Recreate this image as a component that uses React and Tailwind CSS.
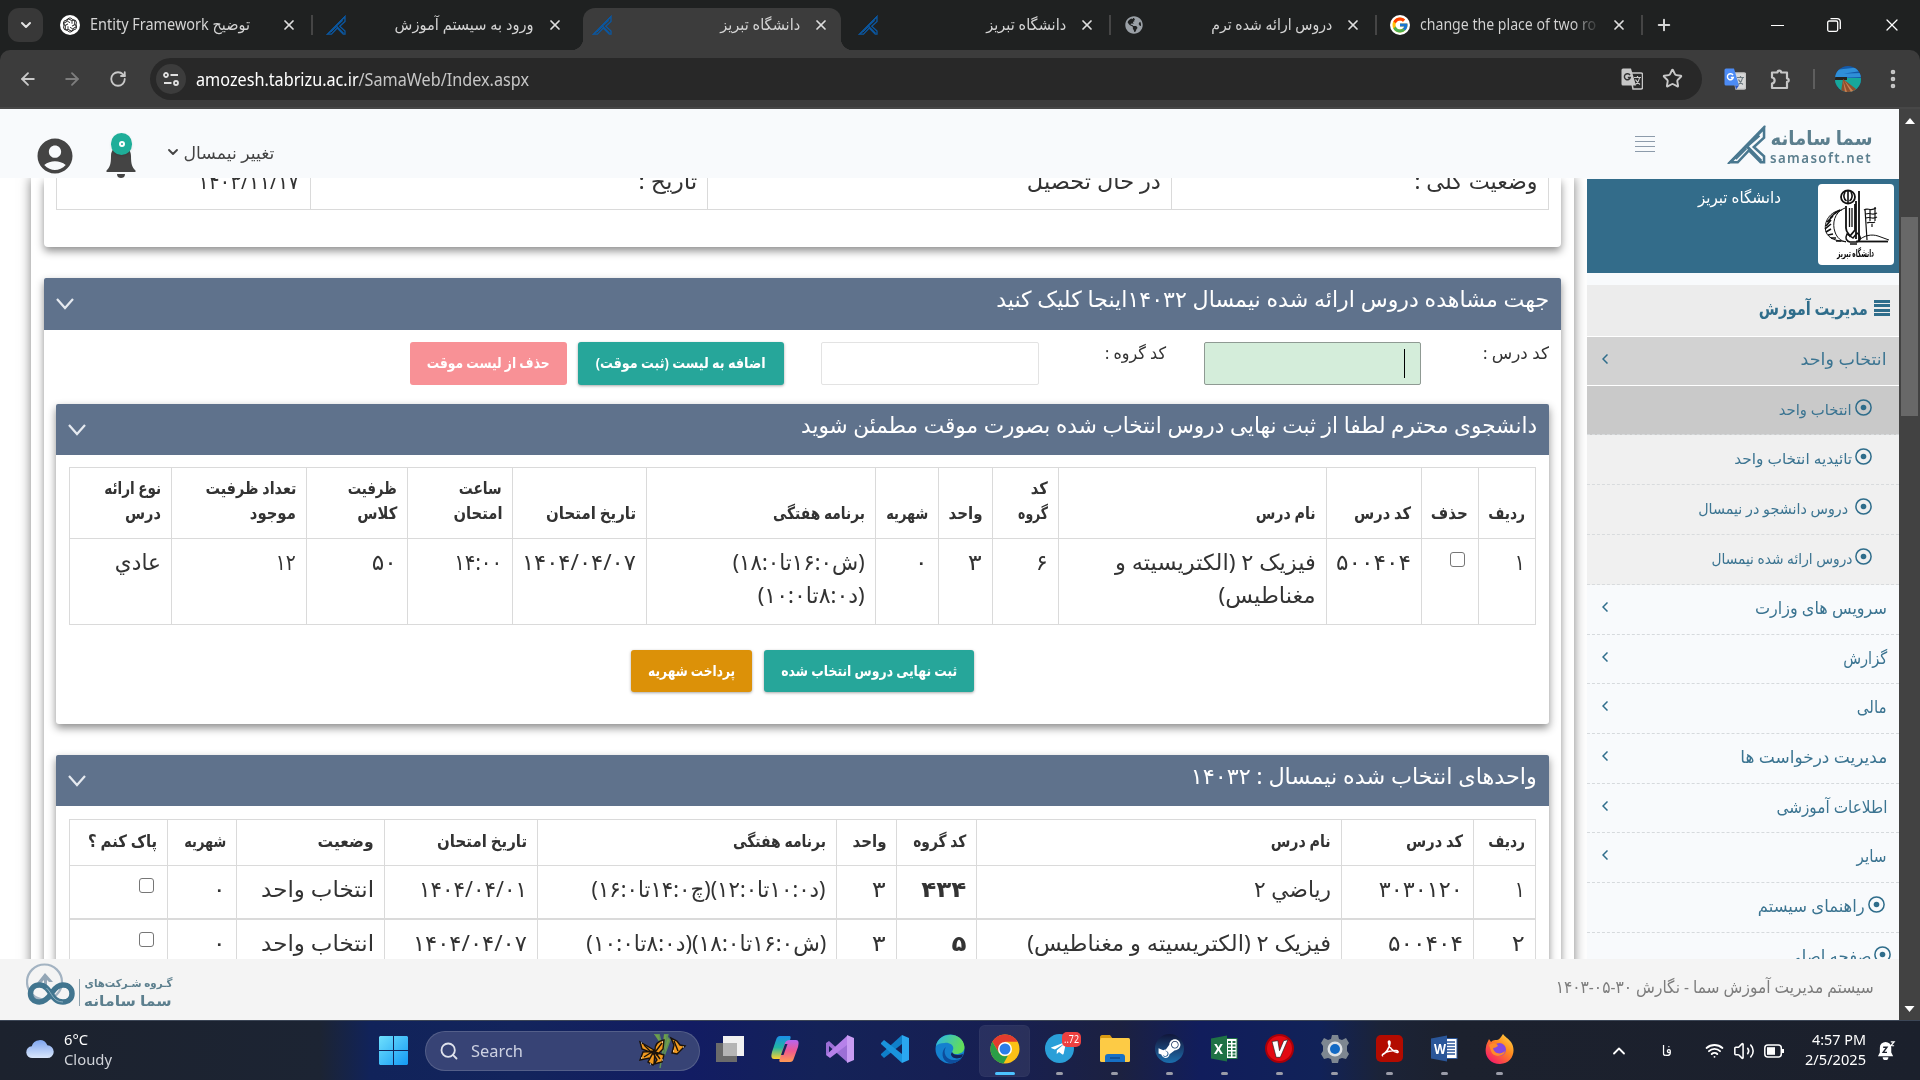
import React, { useLayoutEffect, useRef } from "react";
import {
  ArrowLeft, ArrowRight, RotateCw, X, Plus, ChevronDown, Star, EllipsisVertical,
  Search, ChevronUp, Wifi, Volume2,
} from "lucide-react";
import { FcGoogle } from "react-icons/fc";
import { FaTelegramPlane, FaSteamSymbol, FaGlobeAmericas } from "react-icons/fa";
import { MdAccountCircle } from "react-icons/md";

/* A single line of text condensed or stretched to a given width. */
function Fit({ w, children, ltr = false, className = "" }) {
  const ref = useRef(null);
  useLayoutEffect(() => {
    const el = ref.current;
    el.style.transform = "none";
    const natural = el.getBoundingClientRect().width;
    if (natural > 0) el.style.transform = `scaleX(${w / natural})`;
  });
  return (
    <span dir={ltr ? "ltr" : "rtl"} className={"flex shrink-0 justify-start " + className} style={{ width: w }}>
      <span ref={ref} className={"block shrink-0 whitespace-nowrap " + (ltr ? "origin-left" : "origin-right")}>
        {children}
      </span>
    </span>
  );
}

/* ---------- browser frame ---------- */

function SamaMark({ className, color }) {
  return (
    <svg viewBox="0 0 40 40" className={className} fill="none" stroke={color} strokeWidth="2.600">
      <path d="M38 3.500V13L27.500 22.500 38 32v6.300h-3.500L22.500 26 11 38.300H3.500z" />
      <path d="M33 10.500 19.500 22.500M20 21.500 35 37" strokeWidth="3.200" />
      <path d="M1 40 39 1" strokeWidth="2" />
      <path d="M9 35 20 24" strokeWidth="2" />
    </svg>
  );
}

function OpenAIMark() {
  return (
    <svg viewBox="0 0 24 24" className="size-5">
      <circle cx="12" cy="12" r="12" fill="#fff" />
      <g fill="none" stroke="#222" strokeWidth="1.100">
        {[0, 60, 120, 180, 240, 300].map((a) => (
          <path key={a} transform={`rotate(${a} 12 12)`} d="M12 9.200 8.600 7.300V6.400A3.300 3.300 0 0 1 14.600 5l3 1.900v4.200" />
        ))}
      </g>
    </svg>
  );
}

const sama = <SamaMark className="size-5" color="#0b57a0" />;

function Tab({ icon, children, active, sep, w, ltr }) {
  return (
    <div className="relative flex h-[50px] w-[266px] shrink-0 items-center">
      {active && (
        <>
          <div className="absolute inset-x-1 top-2 bottom-0 rounded-t-[12px] bg-[#3c3c3c]" />
          <div className="absolute bottom-0 -left-2 size-3 bg-[radial-gradient(circle_at_0_0,#1f2121_12px,#3c3c3c_12.5px)]" />
          <div className="absolute -right-2 bottom-0 size-3 bg-[radial-gradient(circle_at_100%_0,#1f2121_12px,#3c3c3c_12.5px)]" />
        </>
      )}
      <div className="relative ml-[13px] flex size-5 items-center justify-center">{icon}</div>
      <div className={"relative ml-[10px] flex h-6 w-[178px] items-center text-[15.500px] text-[#d4d4d4] " + (ltr ? "" : "justify-end")}>
        <Fit w={w} ltr={ltr}>{children}</Fit>
      </div>
      <X className="absolute left-[234px] size-4 text-[#dedede]" strokeWidth={2.6} />
      {sep && <div className="absolute right-0 h-5 w-[2px] bg-[#454545]" />}
    </div>
  );
}

function TranslateIcon({ blue }) {
  return (
    <svg viewBox="0 0 22 22" className="size-[22px]">
      <path d="M9 5h11a1.500 1.500 0 0 1 1.500 1.500v13A1.500 1.500 0 0 1 20 21h-8z" fill={blue ? "#d8d8d8" : "none"} stroke="#c7c7c7" strokeWidth="1.500" />
      <path d="M2 .5h8l5 17H2A1.500 1.500 0 0 1 .5 16V2A1.500 1.500 0 0 1 2 .5z" fill={blue ? "#4c8bf5" : "#c7c7c7"} />
      <path d="M9 7.200A3 3 0 1 0 9.300 9.500H6.800" fill="none" stroke={blue ? "#fff" : "#333"} strokeWidth="1.400" />
      <path d="M13 9.500h7M16.500 8v1.500M18.500 10c-.5 3-2 5-4 6.500M14.500 11.500c1 2 2.500 3.500 4.500 5" fill="none" stroke={blue ? "#6d7a80" : "#c7c7c7"} strokeWidth="1.200" />
      {blue && <path d="m11 17.500 4 0-3 4z" fill="#2a56c6" />}
    </svg>
  );
}

function TabStrip() {
  return (
    <div className="flex h-[50px] items-center bg-[#1f2121]">
      <div className="ml-2 flex h-[34px] w-[35px] items-center justify-center rounded-[11px] bg-[#383838]">
        <ChevronDown className="size-4 text-[#e3e3e3]" strokeWidth={3} />
      </div>
      <div className="ml-1 flex">
        <Tab icon={<OpenAIMark />} w={160} ltr sep>Entity Framework توضیح</Tab>
        <Tab icon={sama} w={139}>ورود به سیستم آموزش</Tab>
        <Tab icon={sama} w={80} active>دانشگاه تبریز</Tab>
        <Tab icon={sama} w={80} sep>دانشگاه تبریز</Tab>
        <Tab icon={<FaGlobeAmericas className="size-[18px] text-[#9aa0a6]" />} w={121} sep>دروس ارائه شده ترم</Tab>
        <Tab icon={<div className="flex size-5 items-center justify-center rounded-full bg-white"><FcGoogle className="size-[18px]" /></div>} w={176} ltr sep>
          <span className="bg-linear-to-r from-[#d4d4d4] from-88% to-[#3a3c3c] bg-clip-text text-transparent">change the place of two ro</span>
        </Tab>
      </div>
      <Plus className="ml-[12px] size-[18px] text-[#d6d6d6]" strokeWidth={2.6} />
      <div className="flex-1" />
      <div className="flex w-[149px] items-center">
        <div className="h-px w-[13px] bg-white" />
        <svg viewBox="0 0 14 14" className="ml-[43px] size-[14px]" fill="none" stroke="#fff" strokeWidth="1.300">
          <rect x=".7" y="3" width="10" height="10.300" rx="1.500" />
          <path d="M3.500.7H10A3.300 3.300 0 0 1 13.300 4v7" />
        </svg>
        <X className="ml-[41px] size-[20px] text-white" strokeWidth={1.5} />
      </div>
    </div>
  );
}

function Toolbar() {
  return (
    <div className="bg-[#1f2121]">
      <div className="flex h-[59px] items-center rounded-t-[10px] border-b-2 border-[#474747] bg-[#3c3c3c] text-[#c9c9c9]">
        <ArrowLeft className="ml-[18px] size-5" strokeWidth={2.2} />
        <ArrowRight className="ml-[24px] size-5 text-[#7d7d7d]" strokeWidth={2.2} />
        <RotateCw className="ml-[27px] size-[18px]" strokeWidth={2.4} />
        <div className="ml-[23px] flex h-[42px] w-[1552px] items-center rounded-full bg-[#282828]">
          <div className="ml-[6px] flex size-[30px] items-center justify-center rounded-full bg-[#3c3c3c]">
            <svg viewBox="0 0 16 16" className="size-4" fill="none" stroke="#e0e0e0" strokeWidth="1.800">
              <circle cx="3" cy="4" r="2" /><path d="M7.500 4H15M1 12h7.500" /><circle cx="13" cy="12" r="2" />
            </svg>
          </div>
          <div className="ml-[10px] pt-px text-[18px]">
            <Fit w={333} ltr><span className="text-white">amozesh.tabrizu.ac.ir</span><span className="text-[#c7c7c7]">/SamaWeb/Index.aspx</span></Fit>
          </div>
          <div className="mr-[19px] ml-auto flex items-center gap-[19px]">
            <TranslateIcon />
            <Star className="size-[21px]" strokeWidth={2.2} />
          </div>
        </div>
        <div className="ml-[22px]"><TranslateIcon blue /></div>
        <svg viewBox="0 0 22 22" className="ml-[23px] size-[22px]" fill="none" stroke="#c7c7c7" strokeWidth="2.200">
          <path d="M3 4.500h5.500a1.800 1.800 0 0 1 3.600 0H18v6a1.700 1.700 0 0 1 0 3.400V20H3v-4.500c3.500-.5 3.500-5.500 0-6z" strokeLinejoin="round" />
        </svg>
        <div className="ml-[22px] h-5 w-[2px] bg-[#5e5e5e]" />
        <svg viewBox="0 0 26 26" className="ml-[20px] size-[26px]">
          <defs><clipPath id="av"><circle cx="13" cy="13" r="13" /></clipPath></defs>
          <g clipPath="url(#av)">
            <rect width="26" height="26" fill="#1459a8" />
            <path d="M0 4 26 1v4L0 9zM0 8l26-1v4L0 12z" fill="#2f8fd8" />
            <rect y="12" width="26" height="14" fill="#17a79a" />
            <path d="M0 11h12v3H0z" fill="#25231f" />
            <path d="M8 13 25 26H6z" fill="#8e4f2d" />
            <path d="m8 14 2 12h2zM9 14l7 12h3z" fill="#c78355" />
          </g>
        </svg>
        <EllipsisVertical className="ml-[20px] size-6" strokeWidth={2.6} />
      </div>
    </div>
  );
}

/* ---------- page header ---------- */

function PageHeader() {
  return (
    <div className="flex h-[69px] shrink-0 bg-[#f8fafc]">
      <MdAccountCircle className="mt-[26px] ml-[34px] size-[42px] text-[#444]" />
      <div className="relative ml-[30px] h-[69px] w-[30px]">
        <svg viewBox="0 0 30 32" className="mt-[37px] h-[32px] w-[30px]" fill="#444">
          <path d="M15 0c6 0 10 4 10 10 0 8 1 11 4.500 14.500V26H.5v-1.500C4 21 5 18 5 10 5 4 9 0 15 0zM11 28h8c0 3-2 4-4 4s-4-1-4-4z" />
        </svg>
        <div className="absolute top-6 left-[5px] flex h-[22px] w-[21px] items-center justify-center rounded-full bg-[#1fae99] shadow">
          <span className="size-[6px] rounded-full border-2 border-white" />
        </div>
      </div>
      <ChevronDown className="mt-[35px] ml-[29px] size-4 text-[#444]" strokeWidth={2.8} />
      <Fit w={91} className="mt-[30px] ml-[2px] text-[17px] leading-7 text-[#444]">تغییر نیمسال</Fit>
      <div className="mt-[27px] ml-auto flex w-[20px] flex-col gap-[4px]">
        {[0, 1, 2, 3].map((i) => <div key={i} className="h-px bg-[#8d9bab]" />)}
      </div>
      <SamaMark className="mt-[16px] ml-[72px] h-[39px] w-[39px]" color="#4a7890" />
      <div className="mt-[16px] mr-[27px] ml-[4px] flex h-[44px] flex-col text-[#5c7f8e]">
        <Fit w={102} className="h-[25px] text-[20px] leading-[26px] font-bold">سما سامانه</Fit>
        <Fit w={102} ltr className="text-[14px] leading-[15px] font-semibold tracking-[1.500px]">samasoft.net</Fit>
      </div>
    </div>
  );
}

/* ---------- main panels ---------- */

const cardShadow = "shadow-[0_4px_8px_rgba(0,0,0,0.45)]";

function CardTitle({ w, h, children }) {
  return (
    <div className={"flex items-start justify-between rounded-t-[2px] bg-[#5f728c] px-3 text-white " + h}>
      <Fit w={w} className="text-[22px] leading-[41px]">{children}</Fit>
      <svg viewBox="0 0 18 12" className="mt-[20px] h-[12px] w-[18px]" fill="none" stroke="#e6eaf0" strokeWidth="2.200">
        <path d="m1 1 8 9 8-9" />
      </svg>
    </div>
  );
}

function Check({ className = "" }) {
  return <span className={"block size-[15px] rounded-[3px] border border-[#767676] bg-white " + className} />;
}

const cell = "border border-[#dadada] p-0";

const t1 = [
  { c: "w-[57px]", h: [["ردیف", 37]], b: [["۱", 10]] },
  { c: "w-[57px]", h: [["حذف", 37]], check: true },
  { c: "w-[95px]", h: [["کد درس", 57]], b: [["۵۰۰۴۰۴", 75]] },
  { c: "w-[268px]", h: [["نام درس", 60]], b: [["فیزیک ۲ (الکتریسیته و", 201], ["مغناطیس)", 97]] },
  { c: "w-[66px]", h: [["کد", 17], ["گروه", 30]], b: [["۶", 12]] },
  { c: "w-[54px]", h: [["واحد", 34]], b: [["۳", 14]] },
  { c: "w-[63px]", h: [["شهریه", 42]], b: [["۰", 13]] },
  { c: "w-[229px]", h: [["برنامه هفتگی", 92]], b: [["(ش۱۶:۰تا۱۸:۰)", 132], ["(د۸:۰تا۱۰:۰)", 107]] },
  { c: "w-[134px]", h: [["تاریخ امتحان", 90]], b: [["۱۴۰۴/۰۴/۰۷", 114]] },
  { c: "w-[105px]", h: [["ساعت", 43], ["امتحان", 49]], b: [["۱۴:۰۰", 48]] },
  { c: "w-[101px]", h: [["ظرفیت", 49], ["کلاس", 40]], b: [["۵۰", 25]] },
  { c: "w-[135px]", h: [["تعداد ظرفیت", 91], ["موجود", 46]], b: [["۱۲", 20]] },
  { c: "w-[102px]", h: [["نوع ارائه", 57], ["درس", 36]], b: [["عادي", 46]] },
];

function TempTable() {
  return (
    <table className="mt-3 mr-px w-[1466px] table-fixed border-collapse">
      <thead>
        <tr className="h-[71px]">
          {t1.map((c, i) => (
            <th key={i} className={cell + " pr-[10px] pb-[13px] align-bottom text-[17px] leading-[25px] font-bold " + c.c}>
              {c.h.map(([t, w]) => <Fit key={t} w={w}>{t}</Fit>)}
            </th>
          ))}
        </tr>
      </thead>
      <tbody>
        <tr className="h-[86px]">
          {t1.map((c, i) => (
            <td key={i} className={cell + " pt-[6px] pr-[10px] align-top text-[22px] leading-[33px]"}>
              {c.check ? <Check className="mt-[7px] mr-[3px]" /> : c.b.map(([t, w]) => <Fit key={t} w={w}>{t}</Fit>)}
            </td>
          ))}
        </tr>
      </tbody>
    </table>
  );
}

const t2 = [
  { c: "w-[62px]", h: ["ردیف", 37], b: [["۱", 10], ["۲", 13]] },
  { c: "w-[132px]", h: ["کد درس", 57], b: [["۳۰۳۰۱۲۰", 84], ["۵۰۰۴۰۴", 75]] },
  { c: "w-[365px]", h: ["نام درس", 60], b: [["رياضي ۲", 77], ["فیزیک ۲ (الکتریسیته و مغناطیس)", 304]] },
  { c: "w-[80px]", h: ["کد گروه", 53], b: [["۴۳۴", 45], ["۵", 15]], bold: true },
  { c: "w-[60px]", h: ["واحد", 34], b: [["۳", 14], ["۳", 14]] },
  { c: "w-[299px]", h: ["برنامه هفتگی", 93], b: [["(د۱۰:۰تا۱۲:۰)(چ۱۴:۰تا۱۶:۰)", 234], ["(ش۱۶:۰تا۱۸:۰)(د۸:۰تا۱۰:۰)", 240]] },
  { c: "w-[153px]", h: ["تاریخ امتحان", 90], b: [["۱۴۰۴/۰۴/۰۱", 108], ["۱۴۰۴/۰۴/۰۷", 114]] },
  { c: "w-[148px]", h: ["وضعیت", 56], b: [["انتخاب واحد", 113], ["انتخاب واحد", 113]] },
  { c: "w-[69px]", h: ["شهریه", 42], b: [["۰", 13], ["۰", 13]] },
  { c: "w-[98px]", h: ["پاک کنم ؟", 69] },
];

function ChosenTable() {
  return (
    <table className="mt-[13px] mr-px w-[1466px] table-fixed border-collapse">
      <thead>
        <tr className="h-[46px]">
          {t2.map((c, i) => (
            <th key={i} className={cell + " pr-[10px] pb-[5px] align-middle text-[17px] leading-[25px] font-bold " + c.c}>
              <Fit w={c.h[1]}>{c.h[0]}</Fit>
            </th>
          ))}
        </tr>
      </thead>
      <tbody>
        {[0, 1].map((r) => (
          <tr key={r} className={r ? "h-[54px] border-t-2 border-[#dadada]" : "h-[53px]"}>
            {t2.map((c, i) => (
              <td key={i} className={cell + " pt-[6px] pr-[10px] align-top text-[22px] leading-[33px] " + (c.bold ? "font-bold" : "")}>
                {c.b ? <Fit w={c.b[r][1]}>{c.b[r][0]}</Fit> : <Check className="mt-[6px] mr-[3px]" />}
              </td>
            ))}
          </tr>
        ))}
      </tbody>
    </table>
  );
}

function Button({ w, className, children }) {
  return (
    <div className={"flex items-center justify-center rounded-[3px] pb-[2px] text-[15px] font-bold text-white " + className}>
      <Fit w={w}>{children}</Fit>
    </div>
  );
}

function Main() {
  const status = [
    ["وضعیت کلی :", 123, "w-[378px] pr-[10px]"],
    ["در حال تحصیل", 134, "w-[464px] pr-[10px]"],
    ["تاریخ :", 59, "w-[398px] pr-[10px]"],
    ["۱۴۰۳/۱۱/۱۷", 101, "w-[254px] pr-[11px]"],
  ];
  return (
    <div className="h-[781px] w-[1587px] overflow-hidden bg-white text-[#333]">
      <div dir="rtl" className="ml-[31px] h-[900px] w-[1543px] px-[13px] shadow-[0_0_11px_rgba(0,0,0,0.5)]">
        <div className={"h-[69px] rounded-b-[4px] bg-white px-[12px] " + cardShadow}>
          <div className="flex h-8 border-b border-l border-[#dadada]">
            {status.map(([t, w, c]) => (
              <div key={t} className={"h-8 overflow-hidden border-r border-[#dadada] " + c}>
                <Fit w={w} className="mt-[-14px] text-[22px] leading-[33px]">{t}</Fit>
              </div>
            ))}
          </div>
        </div>
        <div className={"mt-[31px] h-[800px] bg-white " + cardShadow}>
          <CardTitle w={553} h="h-[52px]">جهت مشاهده دروس ارائه شده نیمسال ۱۴۰۳۲اینجا کلیک کنید</CardTitle>
          <div className="flex h-[74px] items-start px-3 pt-3">
            <Fit w={66} className="text-[17px] leading-[21px]">کد درس :</Fit>
            <div className="mr-[62px] flex h-[43px] w-[217px] rounded-[2px] border border-[#8f9a93] bg-[#d4edda] pt-[6px] pr-[15px]">
              <div className="h-[29px] w-px bg-black" />
            </div>
            <Fit w={61} className="mr-[38px] text-[17px] leading-[21px]">کد گروه :</Fit>
            <div className="mr-[66px] h-[43px] w-[218px] rounded-[2px] border border-[#e3e3e3]" />
            <Button w={170} className="mr-[37px] h-[43px] w-[206px] bg-[#26a69a] shadow-[0_1px_3px_rgba(0,0,0,0.35)]">اضافه به لیست (ثبت موقت)</Button>
            <Button w={123} className="mr-[11px] h-[43px] w-[157px] bg-[#f89196]">حذف از لیست موقت</Button>
          </div>
          <div className="px-3">
            <div className={"h-[320px] rounded-[3px] bg-white " + cardShadow}>
              <CardTitle w={736} h="h-[51px]">دانشجوی محترم لطفا از ثبت نهایی دروس انتخاب شده بصورت موقت مطمئن شوید</CardTitle>
              <div className="px-3"><TempTable /></div>
              <div className="mt-[25px] flex justify-center gap-3">
                <Button w={176} className="h-[42px] w-[210px] bg-[#26a69a] shadow-[0_1px_3px_rgba(0,0,0,0.35)]">ثبت نهایی دروس انتخاب شده</Button>
                <Button w={87} className="h-[42px] w-[121px] bg-[#dc9108] shadow-[0_1px_3px_rgba(0,0,0,0.35)]">پرداخت شهریه</Button>
              </div>
            </div>
            <div className={"mt-[31px] h-[320px] bg-white " + cardShadow}>
              <CardTitle w={346} h="h-[51px]">واحدهای انتخاب شده نیمسال : ۱۴۰۳۲</CardTitle>
              <div className="px-3"><ChosenTable /></div>
            </div>
          </div>
        </div>
      </div>
    </div>
  );
}

/* ---------- sidebar ---------- */

function Dot() {
  return (
    <svg viewBox="0 0 17 17" className="mt-[13px] size-[17px] shrink-0">
      <circle cx="8.500" cy="8.500" r="7.600" fill="none" stroke="#2f6d8b" strokeWidth="1.500" />
      <circle cx="8.500" cy="8.500" r="2.800" fill="#2f6d8b" />
    </svg>
  );
}

function UniversityMark() {
  return (
    <svg viewBox="0 0 76 81" className="h-[81px] w-[76px]">
      <rect width="76" height="81" rx="4" fill="#fff" />
      <g fill="none" stroke="#111" strokeWidth="1">
        <ellipse cx="30" cy="13" rx="7" ry="6.500" strokeWidth="1.800" />
        <path d="M30 6v14M27 8c-2 4-1 7 1.500 9M33 8c2 4 1 7-1.500 9" strokeWidth="1.600" />
        <path d="M28 22v22c0 4 2 5 4 8l5-6V20" strokeWidth="1.800" />
        <path d="M41 7v50M38 17v38" strokeWidth="1.800" />
        <path d="M31.500 24v19M34 24v19" strokeWidth="1.300" />
        <path d="M29 50c-2 4-1 7 3 8h6c5-1 6-5 1-9l-4 5zM32 60h7" strokeWidth="1.500" />
        <path d="M27 24C16 28 14 40 17 48c2 6 6 9 11 10" />
        <path d="M24 26C12 27 5 38 8 48c3 7 10 9 20 9.500" />
        <path d="M22 26l-6 4M18 28l-6 6M15 32l-6 6M13 36l-5 6M13 40l-6 5M13 45l-5 3M15 50l-5 1M18 54l-5 0M23 57l-5 0" strokeWidth="1.600" />
        <path d="M38 57.500h32" strokeWidth="1.800" />
        <path d="M40 57c6-6 14-7 20-5l11 4" />
        <path d="M47 25l2 31M46 26c4-3 6 2 12-2M48 30c4-2 6 2 11-1M48 34c4-2 6 2 11-1M49 39c3-2 5 1 8-1" strokeWidth="1.200" />
        <path d="M52 25v12M57 23v14M54 40v3" strokeWidth="1.200" />
      </g>
      <foreignObject x="14" y="61" width="42" height="17">
        <div dir="rtl" className="text-[11px] leading-[15px] font-bold text-black"><Fit w={37}>دانشگاه تبریز</Fit></div>
      </foreignObject>
    </svg>
  );
}

const side = [
  ["سرویس های وزارت", 132], ["گزارش", 44], ["مالی", 30], ["مدیریت درخواست ها", 147], ["اطلاعات آموزشی", 111], ["سایر", 30],
];
const sub = [
  ["انتخاب واحد", 73, "bg-[#c9c9c9] h-[49px]", "mr-[3px]"],
  ["تائیدیه انتخاب واحد", 118, "bg-[#f0f0f0] h-[50px]", "mr-[3px]"],
  ["دروس دانشجو در نیمسال", 150, "bg-[#f0f0f0] h-[50px]", "mr-[7px]"],
  ["دروس ارائه شده نیمسال", 141, "bg-[#f0f0f0] h-[50px]", "mr-[3px]"],
];

function Arrow() {
  return <svg viewBox="0 0 6 10" className="mt-[17px] mr-auto ml-[15px] h-[10px] w-[6px]" fill="none" stroke="#2f6d8b" strokeWidth="1.500"><path d="M5.500.5 1 5l4.500 4.500" /></svg>;
}

function Sidebar() {
  return (
    <div dir="rtl" className="h-[781px] w-[312px] overflow-hidden bg-[#f8fafc] text-[#3b7491]">
      <div className="mt-px flex h-[94px] bg-[#336c8a] pt-[5px] pr-[5px]">
        <UniversityMark />
        <Fit w={83} className="mr-[37px] text-[16px] leading-[26px] text-white">دانشگاه تبریز</Fit>
      </div>
      <div className="mt-3 flex h-[52px] border-b border-white bg-[#ececec] pr-[9px] text-[#2f6d8b]">
        <div className="mt-[15px] flex h-4 w-4 flex-col justify-between">
          {[0, 1, 2, 3].map((i) => <div key={i} className="h-[3px] bg-[#2f6d8b]" />)}
        </div>
        <Fit w={109} className="mr-[6px] text-[18px] leading-[47px] font-bold">مدیریت آموزش</Fit>
      </div>
      <div className="flex h-[49px] border-b border-white bg-[#d2d2d2] pr-[12px]">
        <Fit w={86} className="text-[17px] leading-[43px]">انتخاب واحد</Fit>
        <Arrow />
      </div>
      {sub.map(([t, w, c, m]) => (
        <div key={t} className={"flex border-b border-dashed border-[#d8dbdd] pr-[27px] " + c}>
          <Dot />
          <Fit w={w} className={"text-[15px] leading-[46px] " + m}>{t}</Fit>
        </div>
      ))}
      {side.map(([t, w]) => (
        <div key={t} className="flex h-[49.700px] border-b border-dashed border-[#d6dadd] pr-[12px]">
          <Fit w={w} className="text-[17px] leading-[45px]">{t}</Fit>
          <Arrow />
        </div>
      ))}
      <div className="flex h-[50px] border-b border-dashed border-[#d6dadd] pr-[14px]">
        <Dot />
        <Fit w={107} className="mr-[3px] text-[17px] leading-[45px]">راهنمای سیستم</Fit>
      </div>
      <div className="flex h-[50px] pr-[8px]">
        <Dot />
        <Fit w={84} className="mr-[3px] text-[17px] leading-[46px]">صفحه اصلی</Fit>
      </div>
    </div>
  );
}

function PageFooter() {
  return (
    <div className="flex h-[61px] shrink-0 items-start bg-[#f4f4f4]">
      <svg viewBox="0 0 50 46" className="mt-[3px] ml-[26px] h-[46px] w-[50px]" fill="none">
        <circle cx="18.500" cy="20" r="17.500" stroke="#a3b3c2" strokeWidth="2.200" />
        <path d="m19 11 8 9h-4l-2-2v8h-3v-8l-3 3h-4z" fill="#93a6b6" />
        <path d="M26 30.500C23 35 19 40 13.500 40 8 40 4.500 36.500 4.500 31.500S8 23 13.500 23c3 0 5 1 7 3M26 30.500C29 26 32 23 37 23c5.500 0 9 3.500 9 8.500S42.500 40 37 40C27 40 26 31 20.500 26" stroke="#41758f" strokeWidth="5.500" />
        <path d="M20.500 26C26 31 27 40 37 40" stroke="#8db0c1" strokeWidth="1" />
      </svg>
      <div className="mt-[20px] ml-[3px] h-[27px] w-px bg-[#8fa3ae]" />
      <div className="mt-[16px] ml-[4px] flex flex-col text-[#5c7f8e]">
        <Fit w={88} className="text-[11px] leading-[16px] font-bold">گـروه شـرکت‌های</Fit>
        <Fit w={88} className="text-[14px] leading-[19px] font-bold">سما سامانه</Fit>
      </div>
      <Fit w={318} className="mt-[16px] mr-[25px] ml-auto text-[17px] leading-6 text-[#7d7d7d]">سیستم مدیریت آموزش سما - نگارش <span dir="ltr" className="inline-block">۱۴۰۳-۰۵-۳۰</span></Fit>
    </div>
  );
}

function Scrollbar() {
  return (
    <div className="flex h-[911px] w-[21px] flex-col items-center bg-[#424242]">
      <svg viewBox="0 0 10 6" className="mt-[9px] h-[6px] w-[10px]"><path d="M5 0 10 6H0z" fill="#fff" /></svg>
      <div className="mt-[93px] h-[199px] w-[17px] bg-[#686868]" />
      <svg viewBox="0 0 10 6" className="mt-auto mb-[8px] h-[6px] w-[11px]"><path d="M5 6 10 0H0z" fill="#fff" /></svg>
    </div>
  );
}

/* ---------- taskbar ---------- */

function Task({ children, run, active }) {
  return (
    <div className={"flex h-[50px] w-[49px] flex-col items-center rounded-[5px] " + (active ? "bg-white/8 ring-1 ring-white/10" : "")}>
      <div className="flex h-[46px] w-[34px] items-center justify-center">{children}</div>
      {active ? <div className="h-[3px] w-5 rounded-full bg-[#4cc2ff]" /> : run && <div className="h-[3px] w-[7px] rounded-full bg-[#9a9ca8]" />}
    </div>
  );
}

const S = ({ children, vb = "0 0 30 30" }) => <svg viewBox={vb} className="size-[30px]">{children}</svg>;

function OfficeIcon({ letter, dark, lines }) {
  return (
    <div className="relative flex h-[27px] w-[27px] items-center">
      <svg viewBox="0 0 27 27" className="absolute inset-0">
        <rect x="13" y="3.500" width="13" height="20" fill="#fff" stroke={dark} strokeWidth="1" />
        {lines === "grid"
          ? <path d="M17 7h3M21.500 7h3M17 10.500h3M21.500 10.500h3M17 14h3M21.500 14h3M17 17.500h3M21.500 17.500h3M17 20.500h3M21.500 20.500h3" stroke={dark} strokeWidth="2" />
          : <path d="M16 7h8M16 10h8M16 13h8M16 16h8M16 19h8" stroke={dark} strokeWidth="1.600" />}
        <path d="M0 3.500 16 .5v26L0 23.500z" fill={dark} />
      </svg>
      <Fit w={letter === "W" ? 12 : 9} ltr className="relative ml-[3px] text-[14px] font-bold text-white">{letter}</Fit>
    </div>
  );
}

function Butterfly() {
  return (
    <svg viewBox="0 0 50 34" className="h-[34px] w-[50px]">
      <path d="M16 0h5l3 12M26 0l4 0-6 22-2 12M28 2l4 4-6 16" fill="#6f9f4a" stroke="#5d8f58" strokeWidth="1.500" />
      <g fill="#f29a1f" stroke="#1a120a" strokeWidth="1.400">
        <path d="M16 16 2 8l2 7 10 4zM16 17 5 18l-3 8 10-2zM17 16c0-6 3-9 9-10l-1 9-6 6zM17 18l9 3-2 7-8 2zM15 19l-5 9 5 3 4-5z" />
        <path d="M36 11 33 4l6 3 3 4 5 1-3 3-5 5-5-1z" />
        <path d="m6 11 6 6M6 23l8-5M24 9l-6 8M22 25l-5-7M36 7l4 10" fill="none" />
      </g>
      <path d="M3 9h1M3 24h1M24 8h1M24 26h1M12 30h1M45 13h1M35 17h1" stroke="#fff" strokeWidth="1.200" />
    </svg>
  );
}

function Taskbar() {
  return (
    <div className="flex h-[60px] items-center border-t border-[#3c4656] bg-[linear-gradient(90deg,#1c222e_0,#1c2433_320px,#11235a_370px,#13245c_520px,#121c63_690px,#142258_820px,#171f52_1000px,#1c2140_1120px,#111d5c_1200px,#112258_1320px,#1b2338_1380px,#1c212e_1450px,#1b202c_100%)] text-white">
      <svg viewBox="0 0 30 24" className="mb-[6px] ml-[25px] h-[22px] w-[30px]">
        <defs><linearGradient id="cl" x1="0" y1="0" x2="0" y2="1"><stop stopColor="#7fa6f0" /><stop offset="1" stopColor="#d9e6fb" /></linearGradient></defs>
        <path d="M7 23a6.500 6.500 0 0 1-1-13 9 9 0 0 1 17-1 7 7 0 0 1 0 14z" fill="url(#cl)" />
      </svg>
      <div className="mb-[3px] ml-[9px] w-[60px] text-[15px] leading-[20px]">
        <Fit w={24} ltr>6°C</Fit>
        <Fit w={48} ltr className="text-[#cfd2d8]">Cloudy</Fit>
      </div>
      <svg viewBox="0 0 29 29" className="ml-[255px] size-[29px]">
        <defs><linearGradient id="wn" x1="0" y1="0" x2="1" y2="1"><stop stopColor="#6fe0fd" /><stop offset="1" stopColor="#1499f3" /></linearGradient></defs>
        <path d="M1 0h13v14H0V1zM15 0h13l1 1v13H15zM0 15h14v14H1l-1-1zM15 15h14v13l-1 1H15z" fill="url(#wn)" />
      </svg>
      <div className="ml-[17px] flex h-10 w-[275px] items-center rounded-full border border-white/15 bg-[#374375]">
        <Search className="ml-[13px] size-[20px] text-[#dfe2ec]" strokeWidth={2.2} />
        <Fit w={52} ltr className="ml-[12px] text-[17px] text-[#cdd1e2]">Search</Fit>
        <div className="mr-[11px] ml-auto"><Butterfly /></div>
      </div>
      <div className="ml-[5px] flex gap-[6px]">
        <Task><S><rect x="1" y="9" width="21" height="19" fill="#6b6b6b" /><rect x="8" y="2" width="21" height="20" fill="#f1f1f1" /><rect x="8" y="9" width="14" height="13" fill="#b5b5b5" /></S></Task>
        <Task>
          <S>
            <defs>
              <linearGradient id="c1" x1="0" y1="0" x2="0" y2="1"><stop stopColor="#1b8ee8" /><stop offset=".5" stopColor="#22b6a2" /><stop offset="1" stopColor="#ffd02f" /></linearGradient>
              <linearGradient id="c2" x1="0" y1="0" x2="0" y2="1"><stop stopColor="#b666f2" /><stop offset=".5" stopColor="#f0588f" /><stop offset="1" stopColor="#ff9a53" /></linearGradient>
            </defs>
            <path d="M10 2h9c2 0 2 1 1 4l-5 15c-1 3-2 4-5 4H4c-3 0-3-3-2-7l4-12c1-3 2-4 4-4z" fill="url(#c1)" />
            <path d="M20 6h6c3 0 3 3 2 7l-4 11c-1 3-2 4-4 4h-9c-2 0-2-1-1-4l5-15c1-2 2-3 5-3z" fill="url(#c2)" />
            <path d="m15 10 2.500 0-4 11h-2.500z" fill="#1c2459" />
          </S>
        </Task>
        <Task><S><path d="M1 9 4 7l10 9 8-14 7 3v20l-7 3L4 12v8l-3 1z" fill="#9c6fd6" /><path d="M22 1l7 3v22l-7 3z" fill="#c99cf3" /><path d="M1 21 22 2v9L5 24z" fill="#b681ea" /></S></Task>
        <Task><S><path d="M22 1 29 4v22l-7 3z" fill="#2aa7f0" /><path d="M22 1v9L4 24l-3-3v-1z" fill="#0f7fc9" /><path d="M1 10v-1l3-3 18 14v9z" fill="#1a94dc" /></S></Task>
        <Task>
          <S>
            <defs><linearGradient id="ed" x1="0" y1="0" x2="1" y2=".3"><stop stopColor="#2bb5ea" /><stop offset="1" stopColor="#62dd5a" /></linearGradient></defs>
            <circle cx="15" cy="15" r="14.500" fill="#1480cf" />
            <path d="M1 12C4-3 28-3 29.500 13c0 5-4 7-8 7-3 0-5-1-4-3 3-5-3-9-8-8-4 0-7 1-8.500 3z" fill="url(#ed)" />
            <path d="M11 13c-4 6 1 14 9 13 3 0 5-1 7-2-3 4-9 6-13 5C6 27 6 16 11 13z" fill="#0d4d9c" />
            <path d="M17 18c1 3 6 4 11 2l-1 3c-5 3-11 1-11-3z" fill="#13235a" />
          </S>
        </Task>
        <Task active>
          <S>
            <circle cx="15" cy="15" r="14.500" fill="#fbc116" />
            <path d="M2.400 7.700A14.500 14.500 0 0 1 27.600 7.700H15L8.700 18.600z" fill="#e33b2e" />
            <path d="M2.400 7.700 8.700 18.600A7 7 0 0 0 18 21.500l-4.500 8A14.500 14.500 0 0 1 2.400 7.700z" fill="#2a9e47" />
            <circle cx="15" cy="15" r="7" fill="#fff" /><circle cx="15" cy="15" r="5.500" fill="#2b7de9" />
          </S>
        </Task>
        <Task run>
          <div className="relative flex size-[29px] items-center justify-center rounded-full bg-[#2a9fd8]">
            <FaTelegramPlane className="mr-[2px] size-[17px] text-white" />
            <div className="absolute -top-[2px] -right-[7px] flex h-[15px] w-[19px] items-center justify-center rounded-[5px] bg-[#ee4040] text-[11px]"><Fit w={15} ltr>..72</Fit></div>
          </div>
        </Task>
        <Task run><S><path d="M0 3c0-1 1-2 2-2h8l3 4H0z" fill="#d99a12" /><rect y="4" width="30" height="24" rx="1.500" fill="#fdcb45" /><path d="M5 28v-5c0-2 1-3 3-3h14c2 0 3 1 3 3v5z" fill="#1670c5" /><path d="M10 24h10" stroke="#0c4a8c" strokeWidth="1.500" /></S></Task>
        <Task run><div className="flex size-[29px] items-center justify-center rounded-full bg-linear-to-b from-[#10163a] to-[#1a6fae]"><FaSteamSymbol className="size-[25px] text-white" /></div></Task>
        <Task run><OfficeIcon letter="X" dark="#1f7245" lines="grid" /></Task>
        <Task run><div className="flex size-[29px] items-center justify-center rounded-full border-2 border-[#a80008] bg-[#e20a12]"><S><path d="m6 6 7-1 2 12 5-12 5-1-9 21h-5z" fill="#fff" stroke="#222" strokeWidth=".8" /></S></div></Task>
        <Task run>
          <S>
            <path d="M12 1h6l1 4 3 1 4-2 3 5-2 3v5l2 3-3 5-4-1-3 1-1 4h-6l-1-4-3-1-4 1-3-5 2-3v-5L1 9l3-5 4 2 3-1z" fill="#7e8791" />
            <circle cx="15" cy="15" r="7.500" fill="#dde1e5" /><circle cx="15" cy="15" r="5" fill="#1269c4" />
          </S>
        </Task>
        <Task run><div className="flex h-[27px] w-[27px] items-center justify-center rounded-[5px] bg-[#b30b00]"><svg viewBox="0 0 20 20" className="size-[20px]" fill="none" stroke="#fff" strokeWidth="1.600"><path d="M2 16c3-1 8-7 8-12 0-3-2-2-1.500 0C9 8 13 13 17 13.500c2 0 1-2-1-2-4 0-9 1-12 3-2 1-2 2.500-1 2" /></svg></div></Task>
        <Task run><OfficeIcon letter="W" dark="#2a5699" /></Task>
        <Task run>
          <S>
            <defs><linearGradient id="ff" x1="1" y1="0" x2=".2" y2="1"><stop stopColor="#ffe14a" /><stop offset=".45" stopColor="#ff8a1e" /><stop offset="1" stopColor="#f5156c" /></linearGradient></defs>
            <path d="M18 0c2 3 5 4 8 8 6 9 1 22-11 22C5 30-1 22 1 13c0-3 2-5 3-8l2 3c2-2 4-2 6-2 2 0 4-3 6-6z" fill="url(#ff)" />
            <circle cx="14.500" cy="15.500" r="6.500" fill="#8449e0" /><path d="M4 11c4-3 8-2 9 1-2 1-3 2-5 2 1 6 8 7 12 3-1 6-12 7-14 0z" fill="#ff8a2a" />
          </S>
        </Task>
      </div>
      <ChevronUp className="ml-[85px] size-[20px]" strokeWidth={2.2} />
      <Fit w={10} className="ml-[33px] text-[15px]">فا</Fit>
      <Wifi className="ml-[33px] size-[19px]" strokeWidth={2.4} />
      <Volume2 className="ml-[9px] size-[22px]" strokeWidth={1.7} />
      <svg viewBox="0 0 21 14" className="ml-[9px] h-[14px] w-[21px]"><rect x=".8" y="1" width="16.500" height="12" rx="3" fill="none" stroke="#fff" strokeWidth="1.500" /><rect x="3" y="3.200" width="8" height="7.600" fill="#fff" /><path d="M19 5v4" stroke="#fff" strokeWidth="2" /></svg>
      <div className="mb-[3px] ml-auto flex flex-col items-end text-[15px] leading-[20px]">
        <Fit w={54} ltr>4:57 PM</Fit>
        <Fit w={61} ltr>2/5/2025</Fit>
      </div>
      <svg viewBox="0 0 20 20" className="mr-[24px] ml-[11px] size-[19px]"><path d="M9 1a6 6 0 0 1 6 6v5l2 4H1l2-4V7a6 6 0 0 1 6-6zM6 17h6a3 3 0 0 1-6 0z" fill="#fff" /><path d="M6.500 6.500h4l-4 5.500h4" stroke="#1b202c" strokeWidth="1.500" fill="none" /><path d="M14.500 1H18l-3.500 4H18" stroke="#fff" strokeWidth="1.300" fill="none" /></svg>
    </div>
  );
}

export default function App() {
  return (
    <div className="flex h-[1080px] w-[1920px] flex-col overflow-hidden bg-white [font-family:'Noto_Sans','DejaVu_Sans',sans-serif]">
      <TabStrip />
      <Toolbar />
      <div className="flex h-[911px] shrink-0">
        <div className="flex w-[1899px] flex-col">
          <PageHeader />
          <div className="flex h-[781px] shrink-0">
            <Main />
            <Sidebar />
          </div>
          <PageFooter />
        </div>
        <Scrollbar />
      </div>
      <Taskbar />
    </div>
  );
}
